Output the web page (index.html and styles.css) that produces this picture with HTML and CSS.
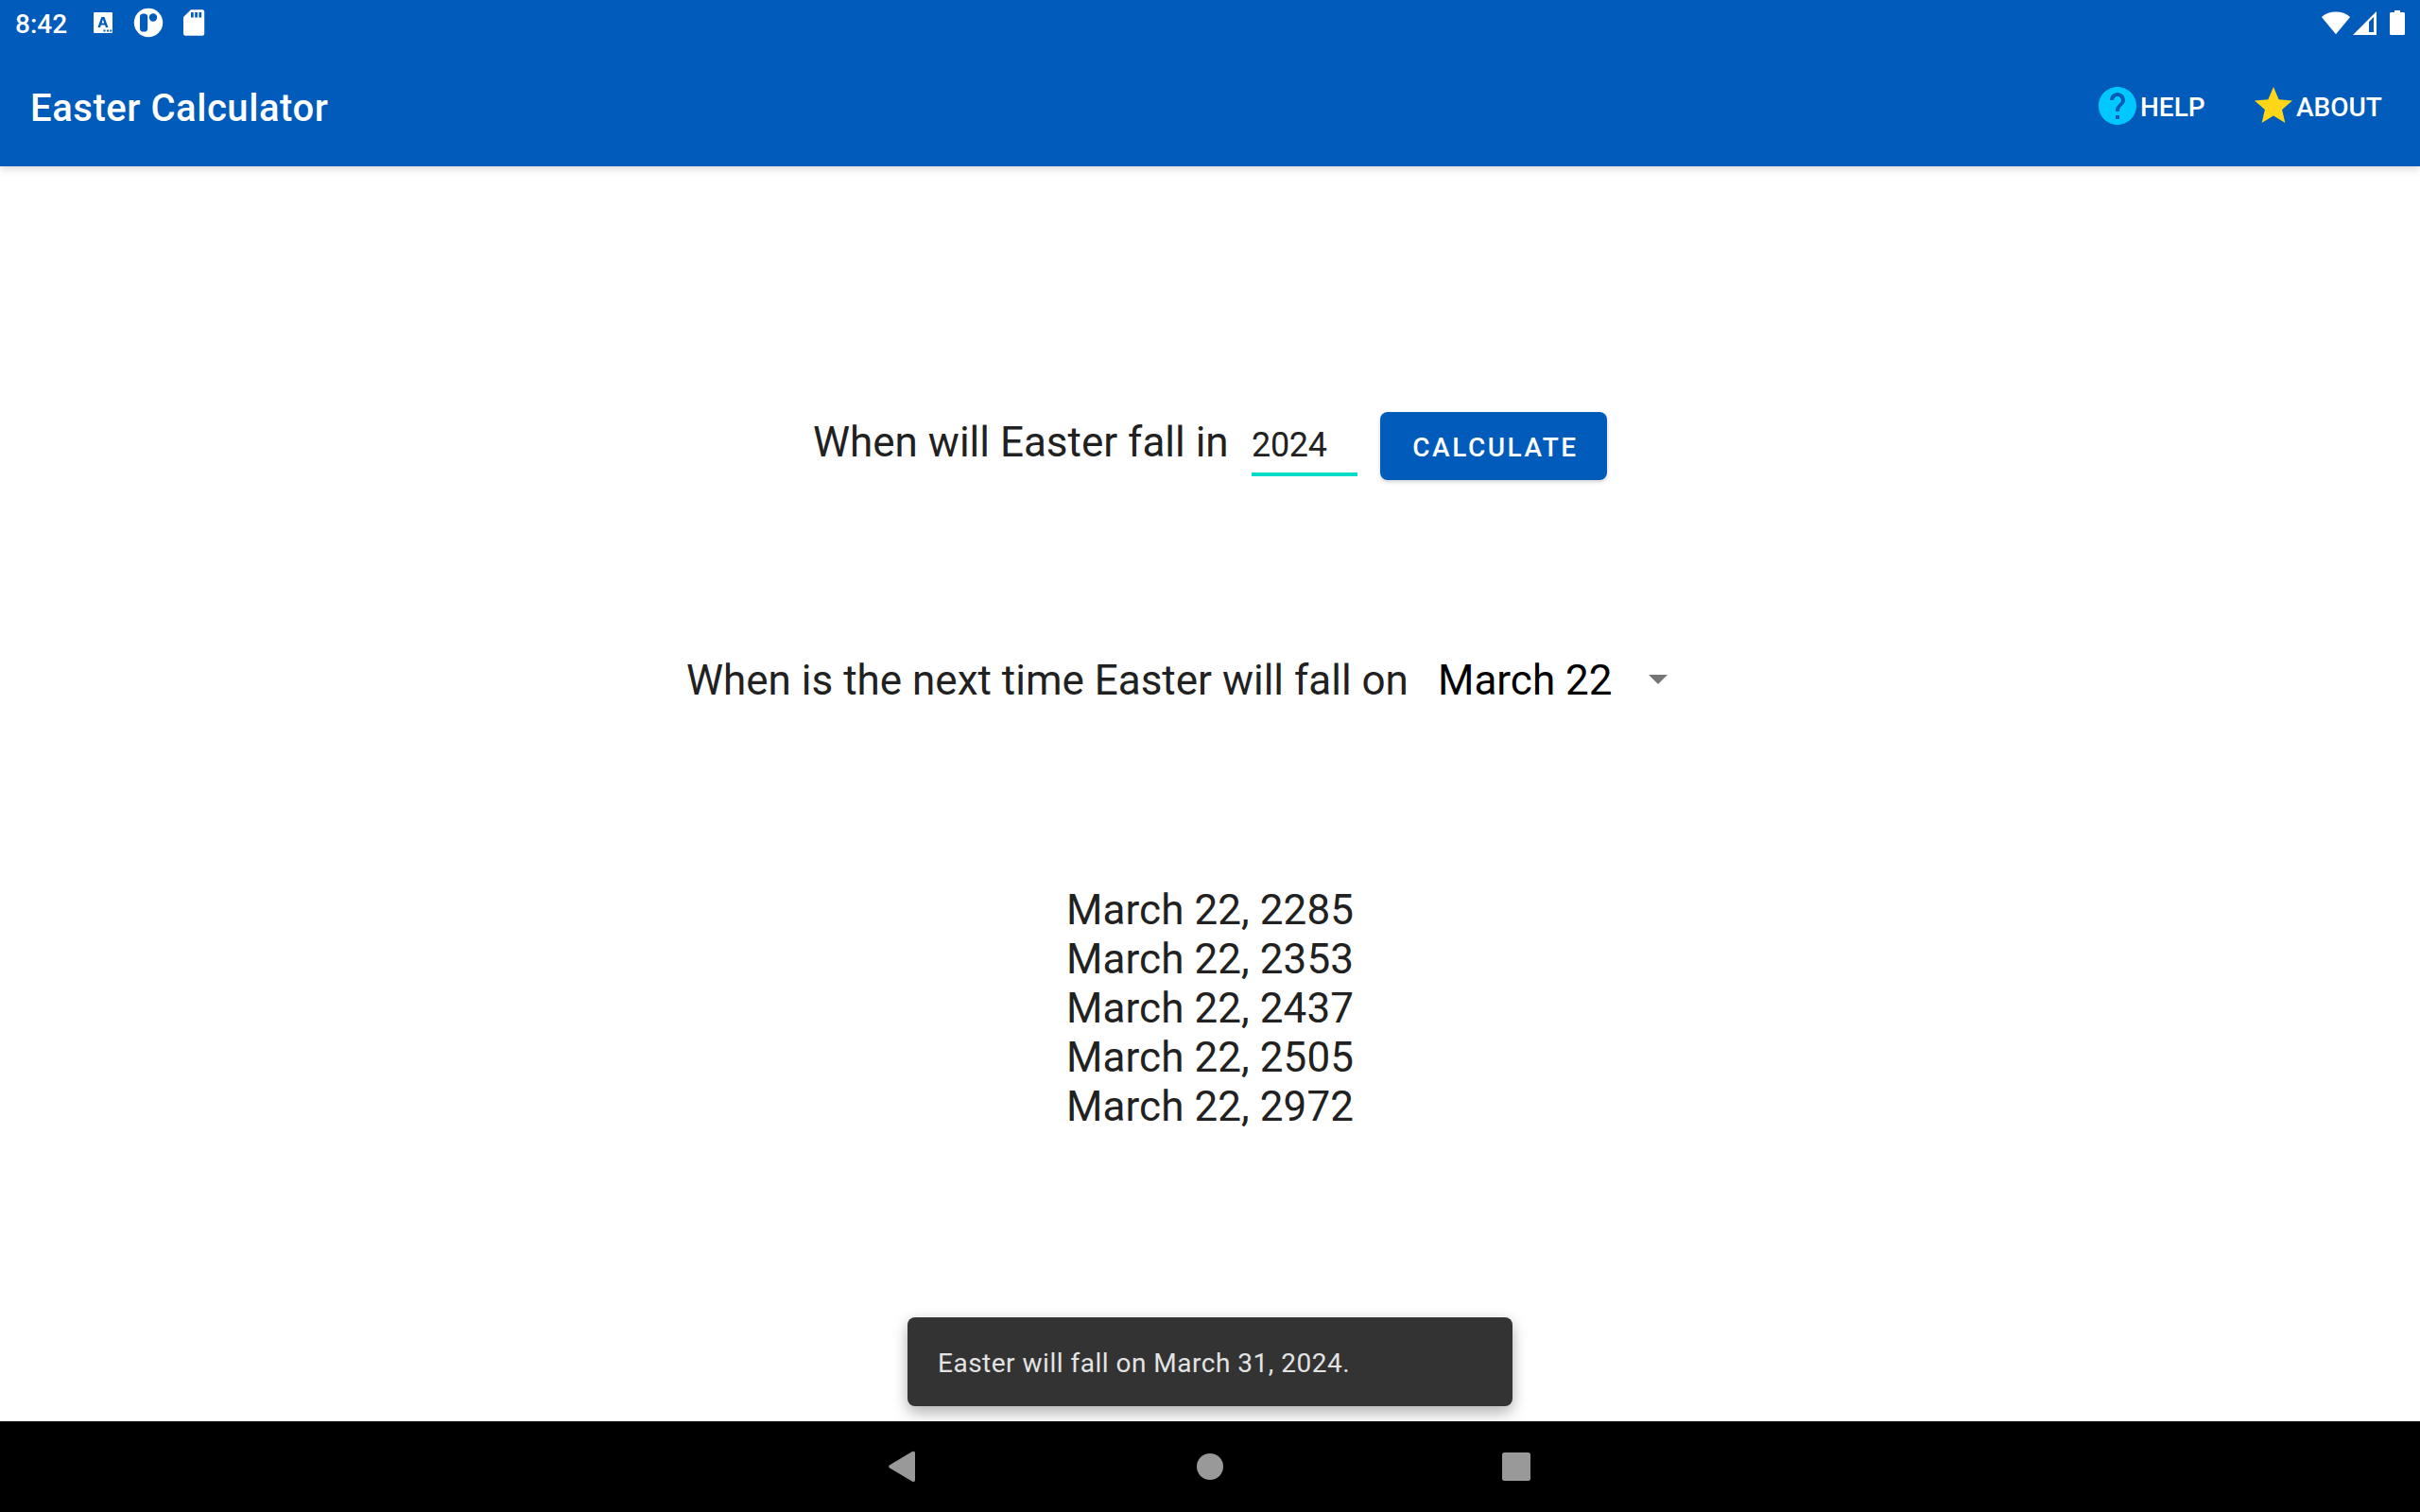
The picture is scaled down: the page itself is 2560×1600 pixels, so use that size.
FILE: index.html
```html
<!DOCTYPE html>
<html lang="en">
<head>
<meta charset="utf-8">
<title>Easter Calculator</title>
<link rel="stylesheet" href="styles.css">
</head>
<body>
<div class="screen">
  <header class="header">
    <div class="status">
      <span class="clock">8:42</span>
      <svg class="notices" width="124" height="48" viewBox="96 0 124 48" fill="#fff">
        <path fill-rule="evenodd" d="M100 13h18a1 1 0 0 1 1 1v20a1 1 0 0 1-1 1H100a1 1 0 0 1-1-1V14a1 1 0 0 1 1-1zM107.300 18 103.500 29h2.500l.8-2.400h4.300l.8 2.400h2.500L110.500 18zM107.600 24.500l1.300-3.900 1.300 3.900zM109.500 31.500v2h2v-2zM113 31.500v2h2v-2zM116.200 31.500v2h2v-2z"/>
        <circle cx="157" cy="24" r="15.200"/>
        <rect x="148" y="14.500" width="8.200" height="19" rx="3.600" fill="#005bbb"/>
        <circle cx="162" cy="18.500" r="4.200" fill="#005bbb"/>
        <path fill-rule="evenodd" d="M202 10.200h12a2.200 2.200 0 0 1 2.200 2.200V35.500a2.200 2.200 0 0 1-2.200 2.200H196.200A2.200 2.200 0 0 1 194 35.500V18zM202 13v5.600h2.700V13zM206.200 13v5.600h2.700V13zM210.400 13v5.600h2.700V13z"/>
      </svg>
      <svg class="signals" width="92" height="48" viewBox="2454 0 92 48" fill="#fff">
        <path d="M2471 36.300 2455.900 18a23.500 23.500 0 0 1 30.200 0z"/>
        <path fill-rule="evenodd" d="M2514 12v25h-25zM2511 18 2506 23v11h5z"/>
        <path d="M2533 11h6v2h3.500a1.500 1.500 0 0 1 1.500 1.500V35.500a1.500 1.500 0 0 1-1.500 1.500h-13a1.500 1.500 0 0 1-1.500-1.500V14.500a1.500 1.500 0 0 1 1.500-1.500h3.500z"/>
      </svg>
    </div>
    <div class="toolbar">
      <h1 class="title">Easter Calculator</h1>
      <nav class="actions">
        <a class="action action-help">
          <svg width="48" height="48" viewBox="0 0 24 24" fill="#00c8ff"><path d="M12 2C6.480 2 2 6.480 2 12s4.480 10 10 10 10-4.480 10-10S17.520 2 12 2zm1 17h-2v-2h2v2zm2.070-7.750l-.9.920C13.450 12.900 13 13.500 13 15h-2v-.5c0-1.100.45-2.100 1.170-2.830l1.240-1.260c.37-.36.59-.86.59-1.410 0-1.100-.9-2-2-2s-2 .9-2 2H8c0-2.210 1.790-4 4-4s4 1.790 4 4c0 .88-.36 1.680-.93 2.250z"/></svg>
          <span>HELP</span>
        </a>
        <a class="action action-about">
          <svg width="48" height="48" viewBox="0 0 24 24" fill="#ffd618"><path d="M12 17.270L18.180 21l-1.640-7.030L22 9.240l-7.190-.61L12 2 9.190 8.630 2 9.240l5.460 4.730L5.820 21z"/></svg>
          <span>ABOUT</span>
        </a>
      </nav>
    </div>
  </header>
  <main class="content">
    <div class="year-row">
      <label class="prompt year-prompt">When will Easter fall in</label>
      <div class="year-input">2024</div>
      <button class="calculate">CALCULATE</button>
    </div>
    <div class="date-row">
      <span class="prompt date-prompt">When is the next time Easter will fall on</span>
      <div class="spinner">
        <span>March 22</span>
        <svg width="20" height="10" viewBox="0 0 20 10" fill="#757575"><path d="M0 0h20L10 10z"/></svg>
      </div>
    </div>
    <div class="results">
      <div>March 22, 2285</div>
      <div>March 22, 2353</div>
      <div>March 22, 2437</div>
      <div>March 22, 2505</div>
      <div>March 22, 2972</div>
    </div>
    <div class="snackbar">Easter will fall on March 31, 2024.</div>
  </main>
  <footer class="navbar">
    <svg width="684" height="36" viewBox="938 1534 684 36" fill="#999">
      <path d="M940.800 1550.500 964.600 1536.300Q968 1534.800 968 1538V1566Q968 1569 964.800 1567.500L940.800 1553.300Q939.200 1552 940.800 1550.500z"/>
      <circle cx="1280" cy="1552" r="14"/>
      <rect x="1589" y="1537" width="30" height="30" rx="2.500"/>
    </svg>
  </footer>
</div>
</body>
</html>
```
FILE: styles.css
```css
* {
  box-sizing: border-box;
}

body {
  margin: 0;
  background: #fff;
  font-family: Roboto, "Liberation Sans", sans-serif;
  color: #212121;
}

.screen {
  display: flex;
  flex-direction: column;
  width: 2560px;
  height: 1600px;
  overflow: hidden;
}

.header {
  flex: none;
  height: 176px;
  background: #005bbb;
  color: #fff;
  box-shadow: 0 3px 8px rgba(0, 0, 0, 0.15);
}

.status {
  display: flex;
  height: 48px;
  padding: 0 14px 0 16px;
}

.clock {
  width: 80px;
  padding-top: 9px;
  font-size: 28px;
  line-height: 34px;
  font-weight: 500;
}

.signals {
  margin-left: auto;
}

.toolbar {
  display: flex;
  height: 128px;
  padding-left: 32px;
}

.title {
  margin: 0;
  padding-top: 43px;
  font-size: 40px;
  line-height: 48px;
  font-weight: 500;
  letter-spacing: 0.55px;
  white-space: nowrap;
}

.actions {
  display: flex;
  margin-left: auto;
  padding-top: 40px;
}

.action {
  display: flex;
  height: 48px;
  font-size: 28px;
  line-height: 52px;
  font-weight: 500;
}

.action-help {
  width: 165px;
}

.action-about {
  width: 179px;
}

.content {
  display: flex;
  flex-direction: column;
  align-items: center;
  flex: none;
  height: 1328px;
  padding-top: 260px;
}

.prompt,
.results,
.spinner {
  font-size: 44px;
  line-height: 52px;
  white-space: nowrap;
}

.year-row {
  display: flex;
  width: 840px;
  height: 72px;
}

.year-prompt {
  width: 464px;
  padding-top: 6px;
}

.year-input {
  width: 112px;
  height: 68px;
  padding-top: 13px;
  border-bottom: 4px solid #00dcc8;
  font-size: 36px;
  line-height: 44px;
  letter-spacing: -0.3px;
}

.calculate {
  width: 240px;
  height: 72px;
  margin: 0 0 0 24px;
  padding: 3px 0 0 4px;
  border: 0;
  border-radius: 8px;
  background: #005bbb;
  box-shadow: 0 2px 4px rgba(0, 0, 0, 0.18);
  color: #fff;
  font-family: inherit;
  font-size: 28px;
  font-weight: 500;
  letter-spacing: 2.5px;
}

.date-row {
  display: flex;
  width: 1108px;
  margin-top: 186px;
}

.date-prompt {
  width: 795px;
}

.spinner {
  display: flex;
  align-items: flex-start;
  color: #000;
}

.spinner span {
  width: 223px;
}

.spinner svg {
  margin-top: 20px;
}

.results {
  margin-top: 191px;
  letter-spacing: 0.08px;
}

.snackbar {
  width: 640px;
  height: 94px;
  margin-top: 197px;
  padding: 32px;
  border-radius: 8px;
  background: #333;
  box-shadow: 0 8px 16px rgba(0, 0, 0, 0.26), 0 0 14px rgba(0, 0, 0, 0.08);
  color: #e3e3e3;
  font-size: 28px;
  line-height: 33px;
  letter-spacing: 0.5px;
}

.navbar {
  position: relative;
  display: flex;
  justify-content: center;
  flex: none;
  height: 96px;
  padding-top: 30px;
  background: #000;
}
```
